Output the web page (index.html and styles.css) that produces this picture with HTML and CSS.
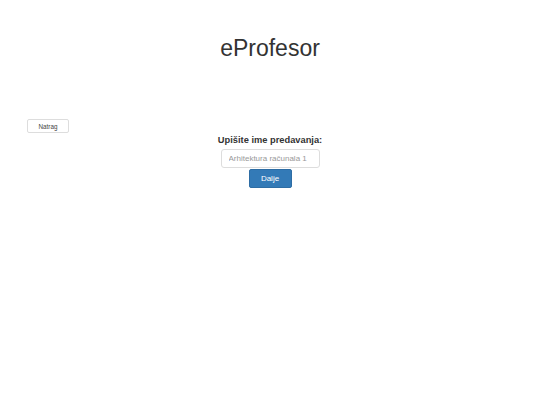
FILE: index.html
```html
<!DOCTYPE html>
<html lang="hr">
<head>
<meta charset="utf-8">
<title>eProfesor</title>
<link rel="stylesheet" href="styles.css">
</head>
<body>
<header class="header">
  <h1 class="title">eProfesor</h1>
</header>
<div class="back-row">
  <button class="btn btn-default">Natrag</button>
</div>
<form class="form">
  <label class="label" for="ime">Upišite ime predavanja:</label>
  <input class="input" id="ime" type="text" placeholder="Arhitektura računala 1">
  <button class="btn btn-primary" type="button">Dalje</button>
</form>
</body>
</html>
```

FILE: styles.css
```css
html, body {
  margin: 0;
  padding: 0;
  background: #fff;
}
body {
  font-family: "Liberation Sans", Arial, sans-serif;
  color: #333;
}
.header {
  display: flex;
  justify-content: center;
  padding-top: 35px;
}
.title {
  margin: 0;
  font-size: 23px;
  font-weight: normal;
  line-height: 26px;
  color: #333;
}
.back-row {
  display: flex;
  padding-left: 27px;
  margin-top: 58px;
}
.btn {
  font-family: "Liberation Sans", Arial, sans-serif;
  border-radius: 2px;
  border: 1px solid transparent;
  cursor: pointer;
  padding: 0;
}
.btn-default {
  width: 42px;
  height: 14px;
  font-size: 6.3px;
  background: #fff;
  border-color: #ddd;
  color: #444;
}
.form {
  display: flex;
  flex-direction: column;
  align-items: center;
  margin-top: 1px;
}
.label {
  font-size: 9.3px;
  font-weight: bold;
  line-height: 12px;
  color: #333;
  margin-bottom: 3px;
}
.input {
  box-sizing: border-box;
  width: 99px;
  height: 19px;
  border: 1px solid #ddd;
  border-radius: 3px;
  padding: 0 7px;
  font-family: "Liberation Sans", Arial, sans-serif;
  font-size: 8px;
  color: #555;
  margin: 0 0 1px;
}
.input::placeholder {
  color: #999;
}
.btn-primary {
  width: 43px;
  height: 19px;
  font-size: 8px;
  background: #337ab7;
  border-color: #2e6da4;
  color: #fff;
}
```
